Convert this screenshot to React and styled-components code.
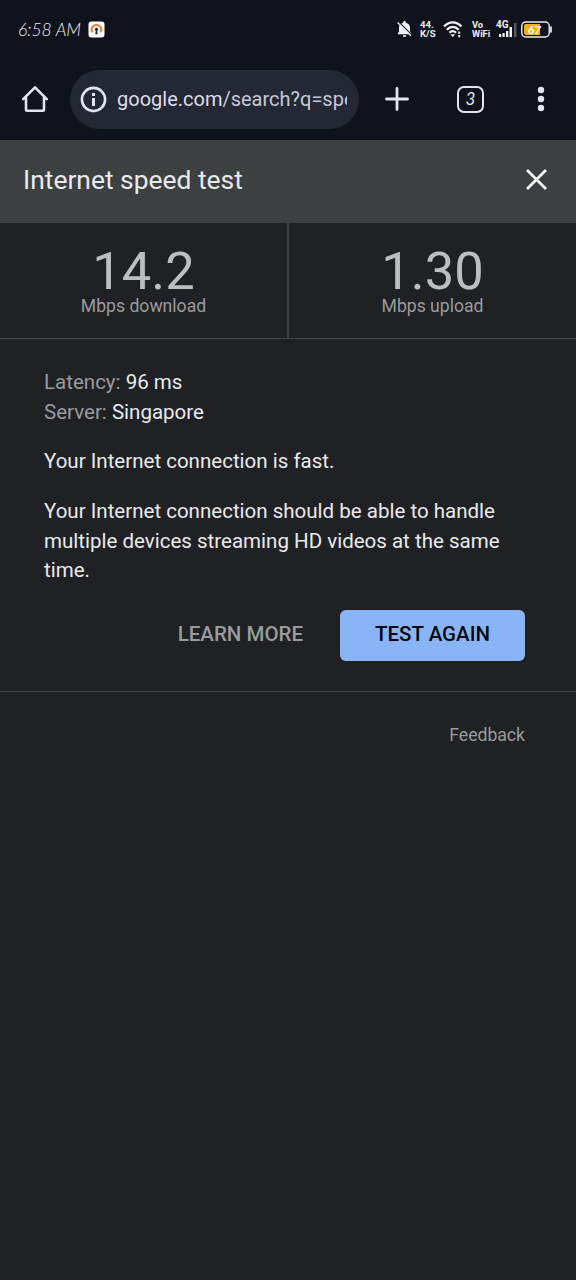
import React from 'react';
import styled, { createGlobalStyle } from 'styled-components';

const GlobalStyle = createGlobalStyle`
  * { box-sizing: border-box; }
  body { margin: 0; background: #202124; font-family: Roboto, "Liberation Sans", sans-serif; }
`;

const Screen = styled.main`
  min-height: 1280px;
  background: #202124;
  overflow: hidden;
`;

const StatusBar = styled.div`
  display: flex;
  align-items: center;
  height: 58px;
  padding: 0 23px 0 18px;
  background: #10131c;
  color: #eef0f5;
`;

const Clock = styled.time`
  width: 65px;
  margin-right: 5px;
  padding-top: 1px;
  font: italic 300 17.5px/20px Lato, sans-serif;
  white-space: nowrap;
`;

const StatusIcons = styled.div`
  display: flex;
  align-items: center;
  margin-left: auto;
`;

const TinyLabel = styled.div`
  width: ${(p) => p.$width}px;
  margin-right: ${(p) => p.$gap}px;
  font: 700 ${(p) => p.$size || 9.6}px/9.5px Roboto, sans-serif;
  white-space: pre;
`;

const Glyph = styled.svg`
  display: block;
  flex: none;
  margin-right: ${(p) => p.$gap || 0}px;
`;

const Signal = styled.div`
  position: relative;
  width: 21px;
  height: 18px;
  margin-right: 4px;
`;

const Network = styled.span`
  position: absolute;
  left: 0;
  top: 0;
  font: 700 10px/9px Roboto, sans-serif;
`;

const Battery = styled.div`
  position: relative;
  width: 32px;
  height: 17px;
`;

const BatteryLevel = styled.span`
  position: absolute;
  left: 0;
  top: 0;
  width: 27px;
  text-align: center;
  font: italic 700 12px/17px Lato, sans-serif;
  color: #fff;
`;

const Toolbar = styled.nav`
  display: flex;
  align-items: center;
  height: 82px;
  padding: 0 22px 0 21px;
  background: #10131c;
  color: #e2e4f0;
`;

const Address = styled.div`
  display: flex;
  flex: none;
  align-items: center;
  width: 289px;
  height: 59px;
  margin: 0 25px 0 21px;
  padding: 0 12px 0 10px;
  border-radius: 30px;
  background: #242734;
`;

const Url = styled.span`
  flex: 1;
  overflow: hidden;
  margin-left: 10px;
  font: 400 20px/28px Roboto, sans-serif;
  color: #c6c9d6;
  white-space: nowrap;
`;

const Host = styled.span`
  color: #dcdeea;
`;

const TabCount = styled.div`
  display: grid;
  flex: none;
  place-items: center;
  width: 27px;
  height: 27px;
  margin: 0 44px 0 47px;
  border: 2.6px solid #e2e4f0;
  border-radius: 7px;
  font: italic 400 17px/20px Lato, sans-serif;
`;

const CardHeader = styled.header`
  display: flex;
  justify-content: space-between;
  height: 83px;
  padding: 25px 26px 0 23px;
  background: #3c4041;
`;

const Title = styled.h1`
  margin: 0;
  font-weight: 400;
  font-size: 26.4px;
  line-height: 30px;
  color: #e8eaed;
`;

const Results = styled.section`
  display: grid;
  grid-template-columns: 289px 1fr;
  height: 116px;
  border-bottom: 1px solid #44474a;
`;

const Result = styled.div`
  padding-top: 23px;
  border-right: ${(p) => (p.$divided ? '2px solid #3c4043' : '0')};
  text-align: center;
`;

const Speed = styled.div`
  font-size: 52.5px;
  line-height: 50px;
  color: #bdbec0;
`;

const Unit = styled.div`
  font-size: 17.6px;
  line-height: 21px;
  color: #9a9b9d;
`;

const Details = styled.section`
  height: 353px;
  padding: 29px 51px 0 44px;
  border-bottom: 1px solid #44474a;
  font-size: 20.53px;
  line-height: 29.5px;
  color: #e8eaed;
`;

const Muted = styled.span`
  color: #9a9b9d;
`;

const Paragraph = styled.p`
  margin: 20.3px 0 0;
`;

const Actions = styled.div`
  display: flex;
  justify-content: flex-end;
  margin-top: 24px;
`;

const Button = styled.button`
  height: 51px;
  padding: 0 ${(p) => (p.$primary ? 35 : 37)}px 2px;
  border: 0;
  border-radius: 6px;
  background: ${(p) => (p.$primary ? '#8ab4f8' : 'transparent')};
  color: ${(p) => (p.$primary ? '#05070b' : '#9a9b9d')};
  font: 500 20.5px/24px Roboto, sans-serif;
  white-space: nowrap;
`;

const Feedback = styled.footer`
  padding: 33px 51px 0;
  text-align: right;
  font-size: 17.6px;
  line-height: 21px;
  color: #9a9b9d;
`;

export default function App() {
  return (
    <Screen>
      <GlobalStyle />
      <StatusBar>
        <Clock>6:58 AM</Clock>
        <Glyph width="17" height="17" viewBox="0 0 17 17">
          <rect x="0.5" y="0.5" width="16" height="16" rx="3" fill="#fff" />
          <path d="M4.9 11.3A4.9 4.3 0 1 1 12.1 11.3" fill="none" stroke="#e0893b" strokeWidth="2.2" />
          <circle cx="8.5" cy="8.2" r="1.6" fill="#28313d" />
          <path d="M7.8 8.5h1.4l.5 4.8H7.3z" fill="#28313d" />
        </Glyph>
        <StatusIcons>
          <Glyph $gap={8} width="16" height="18" viewBox="0 0 16 18" fill="#eef0f5">
            <path d="M8.500 1c.8 0 1.300.5 1.300 1.300v.5c2.700.6 4.200 2.500 4.200 4.800v4l1.300 1.800v.8H1.700v-.8L3 11.600v-4c0-2.300 1.500-4.200 4.200-4.800v-.5C7.200 1.500 7.700 1 8.500 1zM6.700 15.200h3.600c0 1-.8 1.800-1.800 1.800s-1.800-.8-1.800-1.800z" />
            <path d="M2.400 1.700L15.600 14.700" stroke="#10131c" strokeWidth="1.200" />
            <path d="M1.600 2.500L15 15.700" stroke="#eef0f5" strokeWidth="1.300" />
          </Glyph>
          <TinyLabel $width={15} $gap={8}>{'44.\nK/S'}</TinyLabel>
          <Glyph $gap={9} width="20" height="17" viewBox="0 0 20 17" fill="none" stroke="#eef0f5" strokeWidth="2.2">
            <path d="M1 5.5C6-.1 13.5-.1 18.5 5.5M3.8 8.7C7.3 4.800 12.200 4.800 15.700 8.700M6.500 11.700C8.500 9.500 11 9.500 13 11.700" />
            <path d="M7.5 13.3h4.6L9.8 16.2z" fill="#eef0f5" stroke="none" />
            <path d="M16.2 10.5v2.3M16.2 14v2.3" strokeWidth="2" />
          </Glyph>
          <TinyLabel $width={18} $gap={6} $size={9.3}>{'Vo\nWiFi'}</TinyLabel>
          <Signal>
            <Network>4G</Network>
            <svg width="21" height="18" viewBox="0 0 21 18" fill="#eef0f5">
              <path d="M3 14h2.200v3H3zM6.500 13h2.200v4H6.500zM10 11h2.300v6H10zM13.500 7H16v10h-2.500z" />
              <path d="M18 3h2.500v14H18z" fill="#555963" />
            </svg>
          </Signal>
          <Battery>
            <svg width="32" height="17" viewBox="0 0 32 17">
              <rect x="0.8" y="1" width="27.4" height="15" rx="4" fill="none" stroke="#eef0f5" strokeWidth="1.4" />
              <path d="M5 3h14v11H5a2 2 0 0 1-2-2V5a2 2 0 0 1 2-2z" fill="#f9ae1c" />
              <path d="M30 6v5" stroke="#eef0f5" strokeWidth="1.7" strokeLinecap="round" />
            </svg>
            <BatteryLevel>67</BatteryLevel>
          </Battery>
        </StatusIcons>
      </StatusBar>
      <Toolbar>
        <Glyph width="28" height="28" viewBox="0 0 28 28" fill="none" stroke="currentColor" strokeWidth="2.6" strokeLinejoin="round" strokeLinecap="round">
          <path d="M2.2 14.2L14 2.3l11.8 11.900M5 12.500v12.200a1 1 0 0 0 1 1h16a1 1 0 0 0 1-1V12.500" />
        </Glyph>
        <Address>
          <Glyph width="27" height="27" viewBox="0 0 27 27">
            <circle cx="13.5" cy="13.5" r="11.6" fill="none" stroke="currentColor" strokeWidth="2.6" />
            <path d="M12 12h3v8h-3zM12 7h3v3h-3z" fill="currentColor" />
          </Glyph>
          <Url><Host>google.com</Host>/search?q=speed+test</Url>
        </Address>
        <Glyph width="26" height="26" viewBox="0 0 26 26" stroke="currentColor" strokeWidth="2.8" strokeLinecap="round">
          <path d="M13 2.500v21M2.500 13h21" />
        </Glyph>
        <TabCount>3</TabCount>
        <Glyph width="26" height="28" viewBox="0 0 26 28" fill="currentColor">
          <circle cx="13" cy="5" r="3.2" />
          <circle cx="13" cy="14" r="3.2" />
          <circle cx="13" cy="23" r="3.2" />
        </Glyph>
      </Toolbar>
      <CardHeader>
        <Title>Internet speed test</Title>
        <Glyph width="27" height="28" viewBox="0 0 27 28" stroke="#f1f3f4" strokeWidth="2.8">
          <path d="M4 5l19 19M23 5l-19 19" />
        </Glyph>
      </CardHeader>
      <Results>
        <Result $divided>
          <Speed>14.2</Speed>
          <Unit>Mbps download</Unit>
        </Result>
        <Result>
          <Speed>1.30</Speed>
          <Unit>Mbps upload</Unit>
        </Result>
      </Results>
      <Details>
        <div><Muted>Latency:</Muted> 96 ms</div>
        <div><Muted>Server:</Muted> Singapore</div>
        <Paragraph>Your Internet connection is fast.</Paragraph>
        <Paragraph>Your Internet connection should be able to handle multiple devices streaming HD videos at the same time.</Paragraph>
        <Actions>
          <Button>LEARN MORE</Button>
          <Button $primary>TEST AGAIN</Button>
        </Actions>
      </Details>
      <Feedback>Feedback</Feedback>
    </Screen>
  );
}
